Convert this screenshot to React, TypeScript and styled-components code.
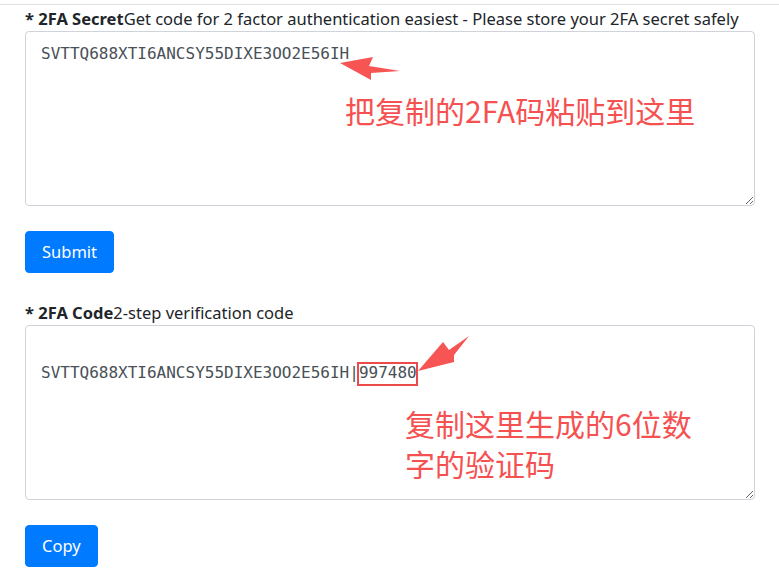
import React from 'react';
import styled, { createGlobalStyle } from 'styled-components';

const SECRET = 'SVTTQ688XTI6ANCSY55DIXE3OO2E56IH';
const CODE = '997480';

const GlobalStyle = createGlobalStyle`
  body {
    margin: 0;
    background: #fff;
    font-family: "Noto Sans", "Open Sans", sans-serif;
    color: #212529;
  }
`;

const App: React.FC = () => {
  return (
    <>
      <GlobalStyle />
      <Page>
        <Divider />
        <Form>
          <FieldLabel>
            <b>* 2FA Secret</b>Get code for 2 factor authentication easiest - Please store your 2FA secret safely
          </FieldLabel>
          <FieldWrap>
            <CodeArea readOnly spellCheck={false} defaultValue={SECRET} />
            <Arrow viewBox="0 0 730 175">
              <polygon points="315,32 348,26 344,35 375,40 346,42 346,49" />
            </Arrow>
            <Note $left={320} $top={59}>把复制的2FA码粘贴到这里</Note>
          </FieldWrap>
          <Button $gap={25}>Submit</Button>

          <FieldLabel $gap={28}>
            <b>* 2FA Code</b>2-step verification code
          </FieldLabel>
          <FieldWrap>
            <CodeArea $padTop={11} readOnly spellCheck={false} defaultValue={'\n' + SECRET + '|' + CODE} />
            <CodeBox />
            <Arrow viewBox="0 0 730 175">
              <polygon points="393,46 418,17 424,25 444,11 429,30 429,37" />
            </Arrow>
            <Note $left={380} $top={78}>
              复制这里生成的6位数<br />字的验证码
            </Note>
          </FieldWrap>
          <Button $gap={25}>Copy</Button>
        </Form>
      </Page>
    </>
  );
};

export default App;

const Page = styled.div`
  width: 779px;
  height: 580px;
  overflow: hidden;
`;

const Divider = styled.div`
  margin-top: 4px;
  height: 1px;
  background: #dee2e6;
`;

const Form = styled.div`
  display: flex;
  flex-direction: column;
  align-items: flex-start;
  padding: 0 24px 0 25px;
`;

const FieldLabel = styled.label<{ $gap?: number }>`
  margin-top: ${(p) => p.$gap ?? 2}px;
  font-size: 16.5px;
  line-height: 24px;
  white-space: nowrap;

  b {
    font-weight: 700;
  }
`;

const FieldWrap = styled.div`
  position: relative;
  width: 730px;
  height: 175px;
`;

const CodeArea = styled.textarea<{ $padTop?: number }>`
  box-sizing: border-box;
  display: block;
  width: 100%;
  height: 100%;
  margin: 0;
  padding: ${(p) => p.$padTop ?? 10}px 15px 10px;
  border: 1px solid #ced4da;
  border-radius: 4px;
  font-family: "DejaVu Sans Mono", "Liberation Mono", monospace;
  font-size: 16px;
  line-height: 24px;
  color: #495057;
  background: #fff;
  outline: none;
`;

const CodeBox = styled.div`
  position: absolute;
  left: 332px;
  top: 37px;
  width: 57px;
  height: 20px;
  border: 2px solid #ec4b4b;
  pointer-events: none;
`;

const Arrow = styled.svg`
  position: absolute;
  left: 0;
  top: 0;
  width: 730px;
  height: 175px;
  pointer-events: none;

  polygon {
    fill: #f75454;
  }
`;

const Note = styled.div<{ $left: number; $top: number }>`
  position: absolute;
  left: ${(p) => p.$left}px;
  top: ${(p) => p.$top}px;
  font-family: "Noto Sans CJK SC", "Noto Sans", sans-serif;
  font-size: 30px;
  line-height: 40px;
  color: #f55151;
  white-space: nowrap;
  pointer-events: none;
`;

const Button = styled.button<{ $gap: number }>`
  margin-top: ${(p) => p.$gap}px;
  padding: 9px 16px;
  border: 1px solid #007bff;
  border-radius: 4px;
  background: #007bff;
  color: #fff;
  font-family: "Noto Sans", "Open Sans", sans-serif;
  font-size: 16.5px;
  line-height: 22px;
  cursor: pointer;
`;
